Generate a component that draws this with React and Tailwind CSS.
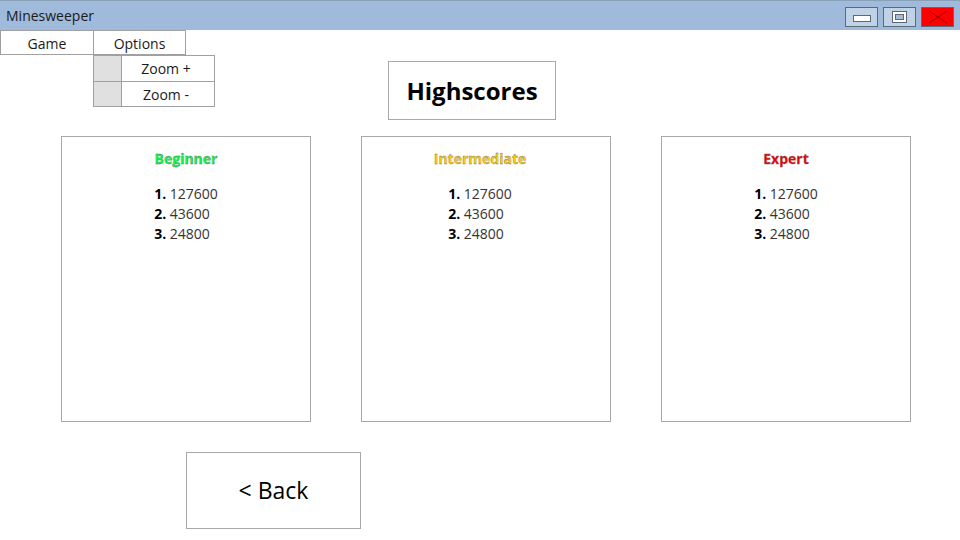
const font = { fontFamily: '"Open Sans", "Noto Sans", sans-serif' };

const levels = [
  { name: "Beginner", color: "text-[#00ff44]", pad: "" },
  { name: "Intermediate", color: "text-[#ffcc00]", pad: "pr-[12px]" },
  { name: "Expert", color: "text-[#f00000]", pad: "" },
];

const scores = [127600, 43600, 24800];

function WinButton({ kind }) {
  if (kind === "close") {
    return (
      <div className="w-[33px] h-[20px] bg-[#ff0000] border border-[#5a6a7a] flex items-center justify-center">
        <svg width="22" height="14" viewBox="0 0 22 14">
          <path d="M2 1 L20 13 M20 1 L2 13" stroke="#a00000" strokeWidth="1" />
        </svg>
      </div>
    );
  }
  return (
    <div className="w-[33px] h-[20px] bg-[#c0d2e6] border border-[#5a6a7a] flex items-center justify-center">
      {kind === "min" ? (
        <div className="w-[18px] h-[7px] mt-[4px] bg-white border border-[#5a6a7a]" />
      ) : (
        <div className="w-[15px] h-[12px] bg-white border border-[#5a6a7a] flex items-center justify-center">
          <div className="w-[9px] h-[6px] bg-[#a8bcd4] border border-[#5a6a7a]" />
        </div>
      )}
    </div>
  );
}

export default function App() {
  return (
    <div className="relative w-[960px] h-[540px] bg-white overflow-hidden text-[#1a1a1a]" style={font}>
      {/* title bar */}
      <div className="h-[30px] bg-[#9fbadb] border-t border-[#8aa0b8] flex items-center justify-between pl-[6px] pr-[6px]">
        <span className="text-[14px]">Minesweeper</span>
        <div className="flex items-center gap-[5px] pt-[2px]">
          <WinButton kind="min" />
          <WinButton kind="max" />
          <WinButton kind="close" />
        </div>
      </div>

      {/* menu */}
      <div className="relative flex h-[25px]">
        <div className="w-[94px] border border-[#a0a0a0] flex items-center justify-center text-[14px] pt-[2px]">Game</div>
        <div className="relative w-[93px] -ml-px border border-[#a0a0a0] flex items-center justify-center text-[14px] pt-[2px]">
          Options
          <div className="absolute left-[-1px] top-[24px] w-[122px] bg-white border border-[#a0a0a0] z-10">
            {["Zoom +", "Zoom -"].map((z, i) => (
              <div key={z} className={"flex h-[25px] " + (i ? "border-t border-[#a0a0a0]" : "")}>
                <div className="w-[28px] bg-[#e0e0e0] border-r border-[#a0a0a0]" />
                <div className="flex-1 flex items-center justify-center text-[14px] pr-[4px]">{z}</div>
              </div>
            ))}
          </div>
        </div>
      </div>

      {/* highscores title */}
      <div className="ml-[388px] mt-[6px] w-[168px] h-[59px] border border-[#a8a8a8] flex items-center justify-center">
        <span className="text-[24px] font-bold text-black">Highscores</span>
      </div>

      {/* panels */}
      <div className="flex gap-[50px] pl-[61px] mt-[16px]">
        {levels.map((l) => (
          <div key={l.name} className={"w-[250px] h-[286px] border border-[#a8a8a8] flex flex-col items-center pt-[11px] " + l.pad}>
            <div
              className={"text-[14px] font-bold " + l.color}
              style={{ WebkitTextStroke: "0.3px #666" }}
            >
              {l.name}
            </div>
            <div className="mt-[15px] flex flex-col text-[14px] leading-[20px] text-[#333]">
              {scores.map((s, i) => (
                <div key={s}>
                  <span className="font-bold text-black">{i + 1}.</span> {s}
                </div>
              ))}
            </div>
          </div>
        ))}
      </div>

      {/* back */}
      <div className="ml-[186px] mt-[30px] w-[175px] h-[77px] border border-[#a8a8a8] flex items-center justify-center">
        <span className="text-[23px] text-black">&lt; Back</span>
      </div>
    </div>
  );
}
